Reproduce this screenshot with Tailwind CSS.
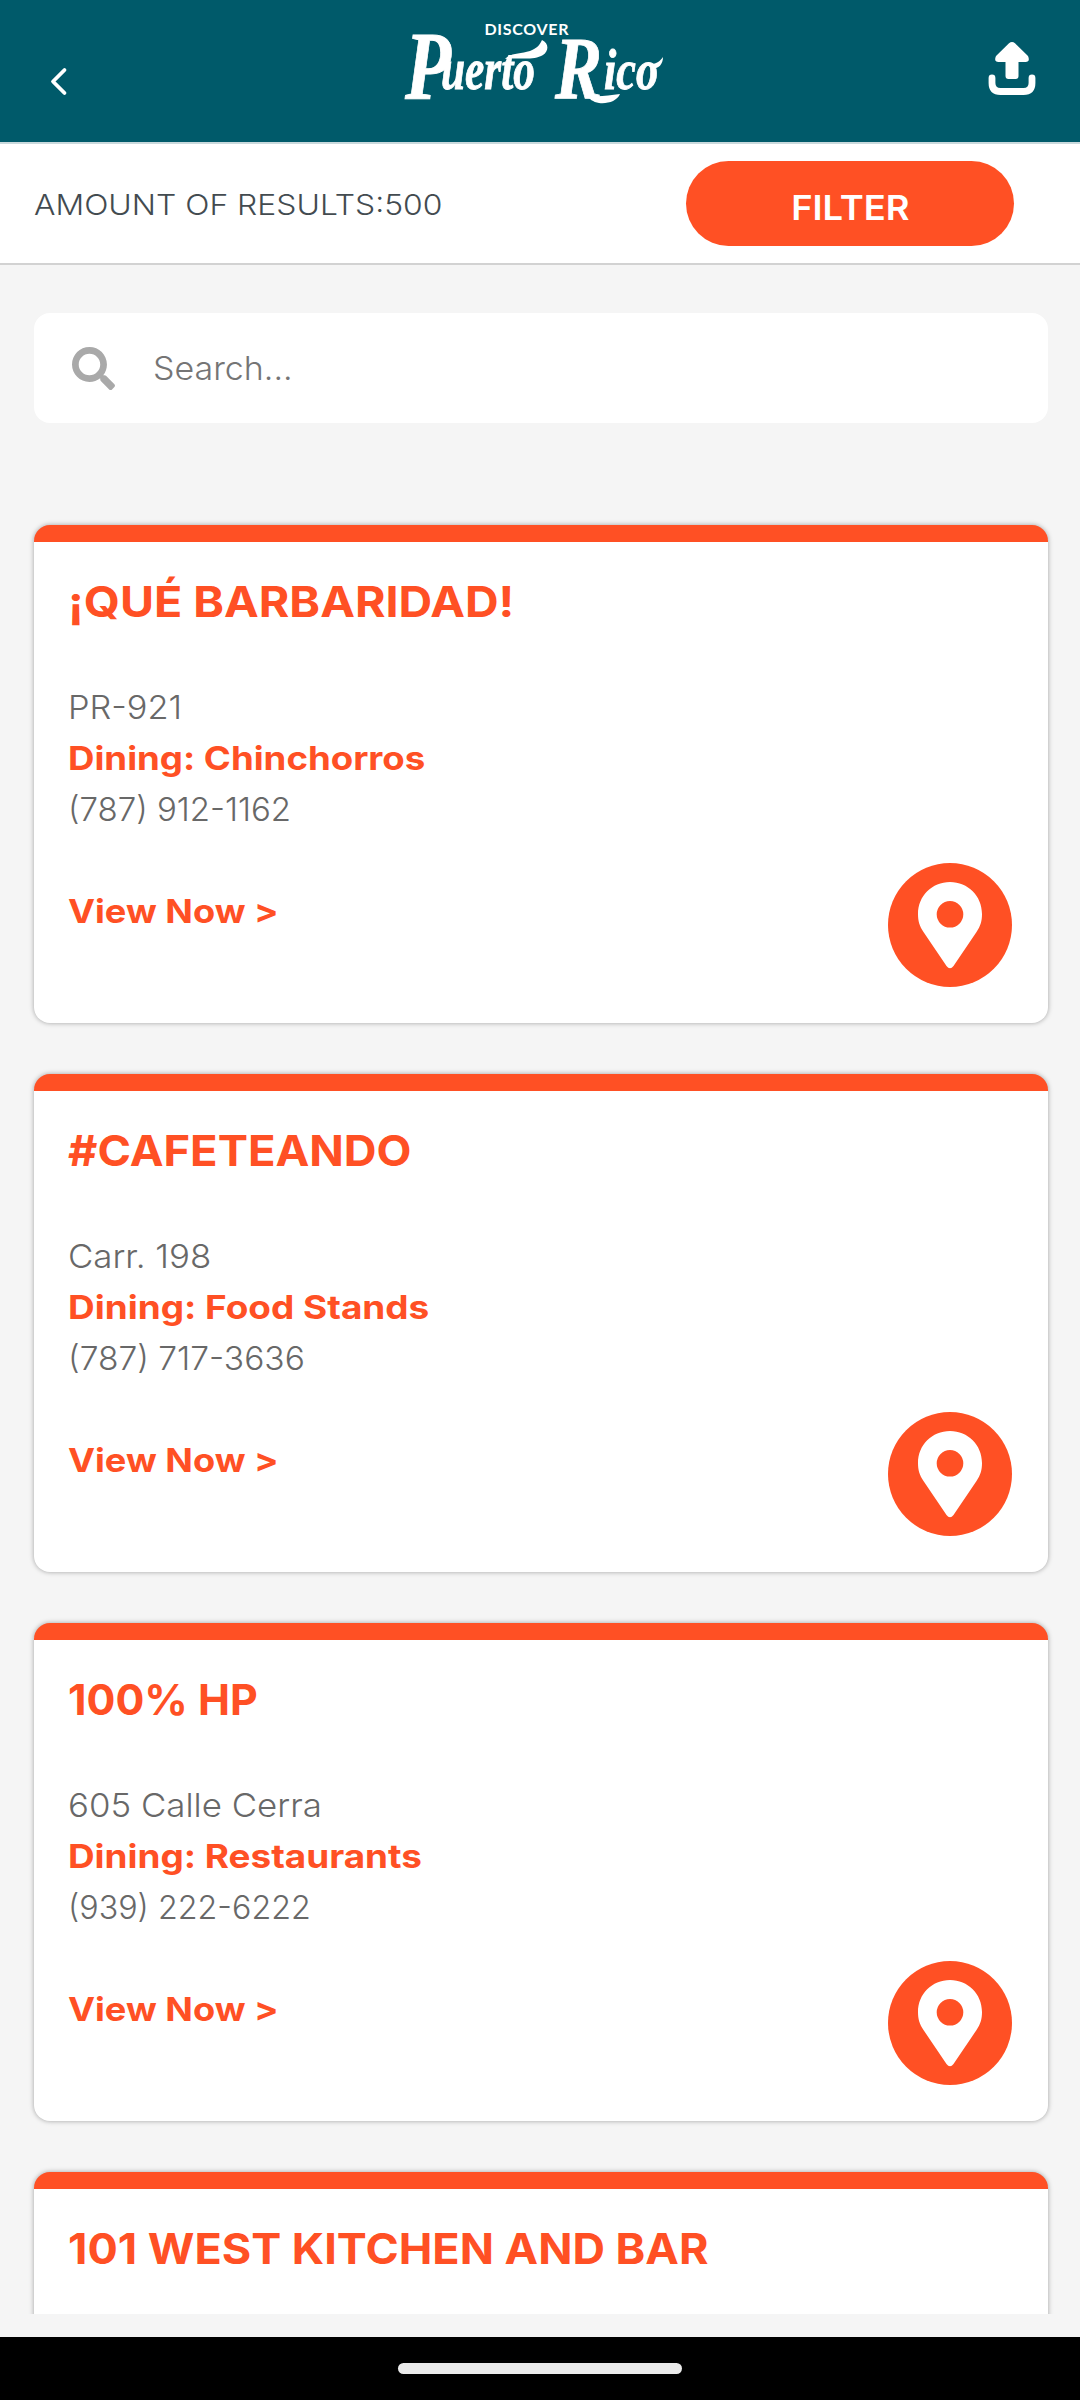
<!DOCTYPE html>
<html lang="en">
<head>
<meta charset="utf-8">
<title>Discover Puerto Rico</title>
<script src="https://cdn.jsdelivr.net/npm/@tailwindcss/browser@4"></script>
</head>
<body class="w-[1080px] h-[2400px] overflow-hidden bg-[#f5f5f5] font-['Inter',sans-serif] flex flex-col">
  <svg class="hidden">
    <symbol id="pin" viewBox="0 0 124 124">
      <circle cx="62" cy="62" r="62" fill="#ff5024"/>
      <path fill="#fff" fill-rule="evenodd" d="M62 19C44 19 30 33 30 51C30 58 31.500 63 35.500 69L58.500 103Q62 107.500 65.500 103L88.500 69C92.500 63 94 58 94 51C94 33 80 19 62 19ZM62 38A13.300 13.300 0 1 1 62 64.600A13.300 13.300 0 1 1 62 38Z"/>
    </symbol>
  </svg>

  <header class="h-36 shrink-0 bg-[#005a6a] border-b-2 border-[#c9d9dc] flex justify-between">
    <svg class="w-40 h-full" viewBox="0 0 160 142" fill="none" stroke="#fff" stroke-width="3.800" stroke-linecap="round" stroke-linejoin="round"><path d="M64.500 70L53 81.500L64.500 93"/></svg>
    <svg class="w-[300px] h-full" viewBox="390 0 300 142" fill="#fff">
      <text x="484.500" y="34.500" font-family="Lato" font-weight="700" font-size="16" textLength="84" lengthAdjust="spacing">DISCOVER</text>
      <text font-family="Liberation Serif" font-style="italic" font-weight="700" stroke="#fff" stroke-width="0.900"><tspan x="405" y="99" font-size="98" textLength="46" lengthAdjust="spacingAndGlyphs">P</tspan><tspan x="441" y="89" font-size="60" textLength="94" lengthAdjust="spacingAndGlyphs">uerto</tspan> <tspan x="555" y="98" font-size="88" textLength="47" lengthAdjust="spacingAndGlyphs">R</tspan><tspan x="604" y="89" font-size="57" textLength="54" lengthAdjust="spacingAndGlyphs">ico</tspan></text>
      <path d="M505 59C510 53 520 54 530 51C538 48 540 44 542 40C549 43 549 51 543 55C533 61 518 57 505 59Z"/>
      <path d="M587 95C597 98 608 95 620 94C617 101 608 104 599 103C593 102 589 99 587 95Z"/>
      <path d="M651 64C657 64 660 61 663 57C663 64 659 69 651 69Z"/>
    </svg>
    <svg class="w-40 h-full" viewBox="920 0 160 142" fill="#fff">
      <path d="M1009 43.200Q1012 40.800 1015 43.200L1028 56Q1030.500 62 1025.500 62H1018.500V76Q1018.500 79 1015.500 79H1008.500Q1005.500 79 1005.500 76V62H998.500Q993.500 62 996 56Z"/>
      <path d="M992 78V83Q992 91.500 1000.500 91.500H1023.500Q1032 91.500 1032 83V78" fill="none" stroke="#fff" stroke-width="6.800" stroke-linecap="round"/>
    </svg>
  </header>

  <section class="h-[121px] shrink-0 bg-white border-b-2 border-[#d2d2d2] flex items-center justify-between pl-[34px] pr-[66px]">
    <p class="text-[29px] leading-10 font-light text-[#434b50] pt-0.5 origin-left scale-x-[1.099]">AMOUNT OF RESULTS:500</p>
    <button class="w-[328px] h-[85px] rounded-full bg-[#ff5024] text-white text-[34px] leading-10 font-semibold pt-2"><span class="inline-block scale-x-[1.070]">FILTER</span></button>
  </section>

  <main class="h-[2049px] shrink-0 overflow-hidden pl-[34px] pr-8 pt-12">
    <div class="h-[110px] rounded-2xl bg-white flex items-center pl-[38px] gap-[38px]">
      <svg class="w-[43px] h-[43px]" viewBox="0 0 512 512" fill="#a9a9a9"><path d="M505 442.700L405.300 343c-4.500-4.500-10.600-7-17-7H372c27.600-35.300 44-79.700 44-128C416 93.100 322.900 0 208 0S0 93.100 0 208s93.100 208 208 208c48.300 0 92.700-16.400 128-44v16.300c0 6.400 2.500 12.500 7 17l99.700 99.700c9.400 9.400 24.600 9.400 33.900 0l28.300-28.300c9.400-9.400 9.400-24.600.1-34zM208 336c-70.700 0-128-57.200-128-128 0-70.700 57.200-128 128-128 70.700 0 128 57.200 128 128 0 70.700-57.200 128-128 128z"/></svg>
      <span class="text-[33px] leading-10 text-[#757575] font-[350] origin-left scale-x-[1.030]">Search...</span>
    </div>

    <div class="mt-[102px] flex flex-col gap-[51px]">
      <article class="h-[498px] shrink-0 rounded-2xl bg-white shadow-[0_0_5px_rgba(0,0,0,0.35)] overflow-hidden border-t-[17px] border-[#ff5024] pl-[34px] pr-9 pt-[30px] flex justify-between text-[33px] leading-[51px] font-light text-[#686868]">
        <div class="flex flex-col items-start">
          <h2 class="text-[42.400px] leading-[60px] mb-[50px] font-bold text-[#ff5024] origin-left scale-x-[1.098]">¡QUÉ BARBARIDAD!</h2>
          <p class="origin-left scale-x-[1.040]">PR-921</p>
          <p class="font-bold text-[#ff5024] origin-left scale-x-[1.109]">Dining: Chinchorros</p>
          <p>(787) 912-1162</p>
          <a class="mt-[51px] font-bold text-[#ff5024] origin-left scale-x-[1.098]">View Now &gt;</a>
        </div>
        <svg class="w-[124px] h-[124px] self-end mb-9"><use href="#pin"/></svg>
      </article>

      <article class="h-[498px] shrink-0 rounded-2xl bg-white shadow-[0_0_5px_rgba(0,0,0,0.35)] overflow-hidden border-t-[17px] border-[#ff5024] pl-[34px] pr-9 pt-[30px] flex justify-between text-[33px] leading-[51px] font-light text-[#686868]">
        <div class="flex flex-col items-start">
          <h2 class="text-[42.400px] leading-[60px] mb-[50px] font-bold text-[#ff5024] origin-left scale-x-[1.069]">#CAFETEANDO</h2>
          <p class="origin-left scale-x-[1.055]">Carr. 198</p>
          <p class="font-bold text-[#ff5024] origin-left scale-x-[1.119]">Dining: Food Stands</p>
          <p class="origin-left scale-x-[1.016]">(787) 717-3636</p>
          <a class="mt-[51px] font-bold text-[#ff5024] origin-left scale-x-[1.098]">View Now &gt;</a>
        </div>
        <svg class="w-[124px] h-[124px] self-end mb-9"><use href="#pin"/></svg>
      </article>

      <article class="h-[498px] shrink-0 rounded-2xl bg-white shadow-[0_0_5px_rgba(0,0,0,0.35)] overflow-hidden border-t-[17px] border-[#ff5024] pl-[34px] pr-9 pt-[30px] flex justify-between text-[33px] leading-[51px] font-light text-[#686868]">
        <div class="flex flex-col items-start">
          <h2 class="text-[42.400px] leading-[60px] mb-[50px] font-bold text-[#ff5024] origin-left scale-x-[1.011]">100% HP</h2>
          <p class="origin-left scale-x-[1.056]">605 Calle Cerra</p>
          <p class="font-bold text-[#ff5024] origin-left scale-x-[1.117]">Dining: Restaurants</p>
          <p class="origin-left scale-x-[0.978]">(939) 222-6222</p>
          <a class="mt-[51px] font-bold text-[#ff5024] origin-left scale-x-[1.098]">View Now &gt;</a>
        </div>
        <svg class="w-[124px] h-[124px] self-end mb-9"><use href="#pin"/></svg>
      </article>

      <article class="h-[498px] shrink-0 rounded-2xl bg-white shadow-[0_0_5px_rgba(0,0,0,0.35)] overflow-hidden border-t-[17px] border-[#ff5024] pl-[34px] pr-9 pt-[30px]">
        <h2 class="w-fit text-[42.400px] leading-[60px] font-bold text-[#ff5024] origin-left scale-x-[1.061]">101 WEST KITCHEN AND BAR</h2>
      </article>
    </div>
  </main>

  <footer class="mt-[23px] h-[63px] shrink-0 bg-black flex justify-center pt-[26px]">
    <div class="w-[284px] h-[11px] rounded-full bg-[#ebebeb]"></div>
  </footer>
</body>
</html>
